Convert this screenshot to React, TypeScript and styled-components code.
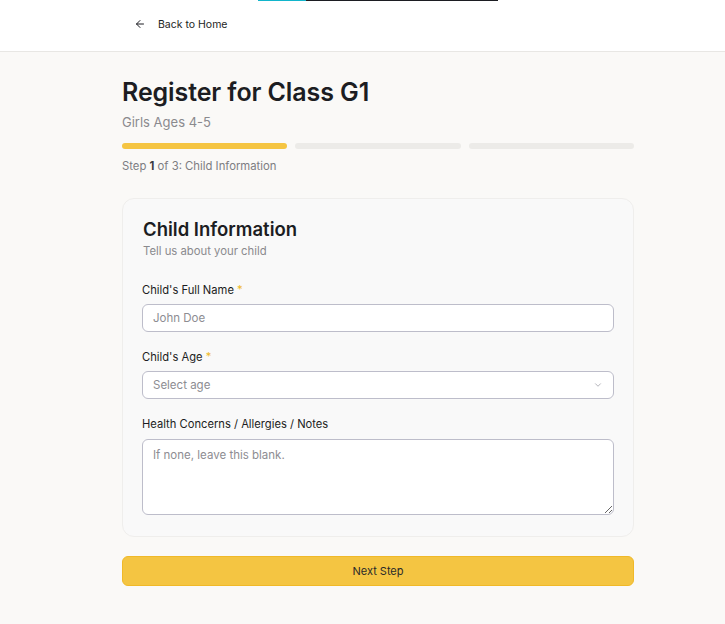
import React, { FC } from "react";
import styled, { createGlobalStyle } from "styled-components";

const GlobalStyle = createGlobalStyle`
  * { box-sizing: border-box; }
  body {
    margin: 0;
    background: #faf9f7;
    font-family: Inter, "Noto Sans", sans-serif;
    color: #1c1d22;
  }
`;

const Header = styled.header`
  position: relative;
  height: 52px;
  background: #ffffff;
  border-bottom: 1px solid #e8e7e4;
`;

const TopLine = styled.div`
  position: absolute;
  top: 0;
  left: 258px;
  width: 240px;
  height: 1px;
  background: linear-gradient(to right, #12b5cb 0 48px, #1c1d22 48px);
`;

const Container = styled.div`
  width: 512px;
  margin-left: 122px;
`;

const HeaderInner = styled(Container)`
  height: 100%;
  display: flex;
  align-items: center;
`;

const BackButton = styled.button`
  display: flex;
  align-items: center;
  gap: 12px;
  padding: 0 12px;
  height: 32px;
  border: none;
  background: none;
  font-family: inherit;
  font-size: 10.5px;
  color: #1c1d22;
  cursor: pointer;
  margin-top: -3px;
`;

const Main = styled(Container)`
  padding-top: 25px;
`;

const Title = styled.h1`
  margin: 0;
  font-size: 25px;
  font-weight: 600;
  letter-spacing: -0.1px;
  line-height: 30px;
`;

const Subtitle = styled.p`
  margin: 6px 0 0;
  font-size: 13px;
  color: #8a8a8e;
  line-height: 18px;
`;

const Steps = styled.div`
  display: flex;
  gap: 8px;
  margin-top: 12px;
`;

const StepBar = styled.div<{ $done?: boolean }>`
  flex: 1;
  height: 6px;
  border-radius: 3px;
  background: ${(p) => (p.$done ? "#f5c542" : "#ecebe8")};
`;

const StepText = styled.p`
  margin: 10px 0 0;
  font-size: 11.3px;
  color: #7d7d82;
  line-height: 14px;

  & > b {
    color: #3a3a3f;
    font-weight: 700;
  }
`;

const Card = styled.section`
  margin-top: 25px;
  background: #f9f9f9;
  border: 1px solid #efeeec;
  border-radius: 12px;
  padding: 18px 19px 21px;
`;

const CardTitle = styled.h2`
  margin: 0 0 0 1px;
  font-size: 18.5px;
  font-weight: 600;
  line-height: 24px;
`;

const CardSub = styled.p`
  margin: 2px 0 0 1px;
  font-size: 11.3px;
  color: #8a8a8e;
  line-height: 16px;
`;

const Field = styled.div`
  margin-top: 24px;
  display: flex;
  flex-direction: column;

  & + & {
    margin-top: 18px;
  }
`;

const Label = styled.label`
  font-size: 11.2px;
  line-height: 14px;
  color: #1c1d22;
  margin-bottom: 7px;

  & > span {
    color: #f0b928;
  }
`;

const inputBase = `
  width: 100%;
  background: #ffffff;
  border: 1px solid #bdbdca;
  border-radius: 6px;
  font-family: Inter, "Noto Sans", sans-serif;
  font-size: 11.5px;
  color: #1c1d22;
  padding: 0 10px;
  outline: none;
  &::placeholder { color: #8d8d92; }
`;

const TextInput = styled.input`
  ${inputBase}
  height: 28px;
`;

const SelectBox = styled.div`
  ${inputBase}
  height: 28px;
  display: flex;
  align-items: center;
  justify-content: space-between;
  color: #8d8d92;
`;

const TextArea = styled.textarea`
  ${inputBase}
  height: 76px;
  margin-top: 1px;
  padding: 8px 10px;
  resize: vertical;
  display: block;
`;

const NextButton = styled.button`
  margin-top: 19px;
  width: 100%;
  height: 30px;
  background: #f4c542;
  border: 1px solid #f0b928;
  border-radius: 6px;
  font-family: inherit;
  font-size: 11px;
  color: #2a2a2a;
  cursor: pointer;
`;

const ArrowLeft: FC = () => (
  <svg width="12" height="12" viewBox="0 0 24 24" fill="none" stroke="#1c1d22" strokeWidth="2" strokeLinecap="round" strokeLinejoin="round">
    <path d="M19 12H5" />
    <path d="M12 19l-7-7 7-7" />
  </svg>
);

const Chevron: FC = () => (
  <svg width="10" height="10" viewBox="0 0 24 24" fill="none" stroke="#a6a6ad" strokeWidth="2" strokeLinecap="round" strokeLinejoin="round">
    <path d="M6 9l6 6 6-6" />
  </svg>
);

const App: FC = () => {
  return (
    <>
      <GlobalStyle />
      <Header>
        <TopLine />
        <HeaderInner>
          <BackButton>
            <ArrowLeft />
            Back to Home
          </BackButton>
        </HeaderInner>
      </Header>
      <Main>
        <Title>Register for Class G1</Title>
        <Subtitle>Girls Ages 4-5</Subtitle>
        <Steps>
          <StepBar $done />
          <StepBar />
          <StepBar />
        </Steps>
        <StepText>
          Step <b>1</b> of 3: Child Information
        </StepText>
        <Card>
          <CardTitle>Child Information</CardTitle>
          <CardSub>Tell us about your child</CardSub>
          <Field>
            <Label>
              Child's Full Name <span>*</span>
            </Label>
            <TextInput placeholder="John Doe" />
          </Field>
          <Field>
            <Label>
              Child's Age <span>*</span>
            </Label>
            <SelectBox>
              Select age
              <Chevron />
            </SelectBox>
          </Field>
          <Field>
            <Label>Health Concerns / Allergies / Notes</Label>
            <TextArea placeholder="If none, leave this blank." />
          </Field>
        </Card>
        <NextButton>Next Step</NextButton>
      </Main>
    </>
  );
};

export default App;
